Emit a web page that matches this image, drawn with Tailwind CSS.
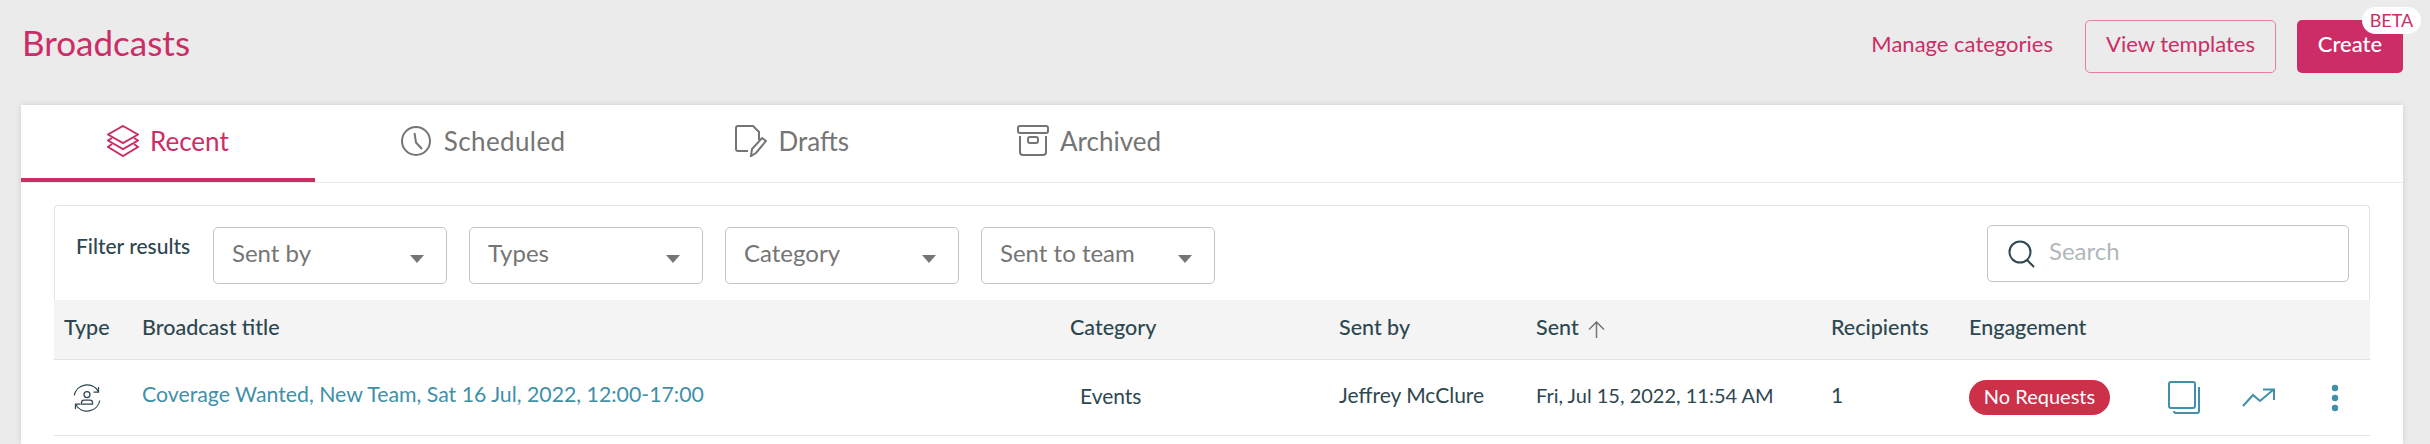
<!DOCTYPE html>
<html lang="en">
<head>
    <meta charset="UTF-8">
    <title>Broadcasts</title>
    <script src="https://cdn.jsdelivr.net/npm/@tailwindcss/browser@4"></script>
</head>
<body class="bg-[#ebebeb] h-[444px] overflow-hidden font-['Lato','Open_Sans',sans-serif]">

    <!-- Header -->
    <header class="h-[105px] flex justify-between pl-[22px] pr-[27px]">
        <h1 class="text-[35px] leading-[40px] mt-[22px] text-[#cd2d66] font-normal">Broadcasts</h1>
        <div class="flex items-start pt-[20px]">
            <a class="h-[47px] flex items-center text-[22px] text-[#cd2d66] mr-[32px]">Manage categories</a>
            <a class="w-[191px] h-[53px] pb-[6px] flex items-center justify-center rounded-[5px] border border-[#e87ea5] text-[22px] text-[#cd2d66] mr-[21px]">View templates</a>
            <button class="relative w-[106px] h-[53px] pb-[6px] flex items-center justify-center rounded-[5px] bg-[#cd2d66] text-[22px] font-medium text-white">
                Create
                <span class="absolute left-[65px] top-[-13px] w-[59px] h-[27px] flex items-center justify-center rounded-full bg-white text-[18px] font-normal text-[#cd2d66]">BETA</span>
            </button>
        </div>
    </header>

    <!-- Card -->
    <main class="ml-[21px] w-[2382px] h-[339px] bg-white shadow-[0_0_6px_rgba(0,0,0,0.12)]">

        <!-- Tabs -->
        <nav class="flex h-[78px] border-b border-[#ebebeb] text-[26px] text-[#757575]">
            <a class="flex items-center gap-[11px] px-[86px] h-[77px] pb-[1px] border-b-[4px] border-[#cd2d66] text-[#cd2d66]">
                <svg class="w-[32px] h-[32px]" viewBox="0 0 32 32" fill="none" stroke="currentColor" stroke-width="2"><path d="M16 1 31 9.5 16 18 1 9.5Z"/><path d="M5 13 1 15.5 16 24 31 15.5 27 13"/><path d="M5 19 1 22 16 31 31 22 27 19"/></svg>
                Recent
            </a>
            <a class="flex items-center gap-[13px] pl-[86px] pr-[83px] h-[77px] pb-[5px] tracking-[0.4px]">
                <svg class="w-[30px] h-[30px]" viewBox="0 0 30 30" fill="none" stroke="currentColor" stroke-width="2"><circle cx="15" cy="15" r="14"/><path d="M13.5 7 15 16.5 21 23"/></svg>
                Scheduled
            </a>
            <a class="flex items-center gap-[12px] pl-[86px] pr-[82px] h-[77px] pb-[5px]">
                <svg class="w-[32px] h-[32px]" viewBox="0 0 32 32" fill="none" stroke="currentColor" stroke-width="2"><path d="M13 26H3Q1 26 1 24V3Q1 1 3 1H18L24 7V15"/><path d="M16 31 17 24 27 13 31 16 21 28Z"/></svg>
                Drafts
            </a>
            <a class="flex items-center gap-[11px] px-[86px] h-[77px] pb-[5px]">
                <svg class="w-[32px] h-[32px]" viewBox="0 0 32 32" fill="none" stroke="currentColor" stroke-width="2"><rect x="1" y="1" width="30" height="7" rx="2"/><path d="M3 11V27Q3 30 6 30H26Q29 30 29 27V11"/><rect x="11" y="12" width="10" height="6" rx="2"/></svg>
                Archived
            </a>
        </nav>

        <section class="mx-[33px] mt-[22px]">
            <!-- Filters -->
            <div class="h-[95px] flex items-start border-x border-t border-[#e2e2e2] rounded-t-[4px] pl-[21px] pr-[20px] pt-[21px]">
                <span class="w-[137px] text-[21px] font-medium text-[#2d4750] leading-[40px] mt-[-1px]">Filter results</span>
                <div class="flex gap-[22px]">
                    <div class="w-[234px] h-[57px] flex items-center justify-between pl-[18px] pr-[22px] pb-[6px] rounded-[5px] border border-[#c4c4c4] text-[24px] text-[#757575]">Sent by<i class="w-0 h-0 mt-[12px] border-x-[7.5px] border-x-transparent border-t-[8px] border-t-[#757575]"></i></div>
                    <div class="w-[234px] h-[57px] flex items-center justify-between pl-[18px] pr-[22px] pb-[6px] rounded-[5px] border border-[#c4c4c4] text-[24px] text-[#757575]">Types<i class="w-0 h-0 mt-[12px] border-x-[7.5px] border-x-transparent border-t-[8px] border-t-[#757575]"></i></div>
                    <div class="w-[234px] h-[57px] flex items-center justify-between pl-[18px] pr-[22px] pb-[6px] rounded-[5px] border border-[#c4c4c4] text-[24px] text-[#757575]">Category<i class="w-0 h-0 mt-[12px] border-x-[7.5px] border-x-transparent border-t-[8px] border-t-[#757575]"></i></div>
                    <div class="w-[234px] h-[57px] flex items-center justify-between pl-[18px] pr-[22px] pb-[6px] rounded-[5px] border border-[#c4c4c4] text-[24px] text-[#757575]">Sent to team<i class="w-0 h-0 mt-[12px] border-x-[7.5px] border-x-transparent border-t-[8px] border-t-[#757575]"></i></div>
                </div>
                <div class="ml-auto mt-[-2px] w-[362px] h-[57px] flex items-center gap-[13px] pl-[20px] pb-[6px] rounded-[5px] border border-[#c4c4c4] text-[24px] text-[#b0b8bb]">
                    <svg class="w-[28px] h-[28px] mt-[6px] text-[#2d4750]" viewBox="0 0 28 28" fill="none" stroke="currentColor" stroke-width="2"><circle cx="12" cy="12" r="10.5"/><path d="M19 20 26 27"/></svg>
                    Search
                </div>
            </div>

            <!-- Table head -->
            <div class="grid grid-cols-[78px_928px_269px_197px_295px_138px_1fr] items-center h-[60px] pl-[10px] pb-[5px] bg-[#f4f4f4] border-b border-[#e2e2e2] text-[21.5px] font-medium text-[#2d4750]">
                <span>Type</span>
                <span>Broadcast title</span>
                <span>Category</span>
                <span>Sent by</span>
                <span class="flex items-center gap-[9px]">Sent
                    <svg class="w-[17px] h-[17px] mt-[4px] text-[#757575]" viewBox="0 0 17 17" fill="none" stroke="currentColor" stroke-width="1.5"><path d="M8.500 17V1M1 8.500 8.500 1 16 8.500"/></svg>
                </span>
                <span>Recipients</span>
                <span>Engagement</span>
            </div>

            <!-- Row -->
            <div class="grid grid-cols-[78px_928px_269px_197px_295px_138px_1fr] items-center h-[76px] pl-[10px] border-b border-[#e2e2e2] text-[21px] text-[#2d4750]">
                <svg class="w-[28px] h-[28px] ml-[9px]" viewBox="0 0 28 28" fill="none" stroke="currentColor" stroke-width="1.25"><path d="M1.200 11.500A13 13 0 0 1 25.300 7.500"/><path d="M25.500 3V8H20.500"/><path d="M26.800 16.500A13 13 0 0 1 2.700 20.500"/><path d="M2.500 25V20H7.500"/><circle cx="14" cy="10.500" r="3"/><path d="M8.500 20V18.500Q8.500 16 11 16H17Q19.500 16 19.500 18.500V20Z"/></svg>
                <a class="text-[21.28px] text-[#3f90a8] mb-[5px]">Coverage Wanted, New Team, Sat 16 Jul, 2022, 12:00-17:00</a>
                <span class="pl-[10px] mb-[3px]">Events</span>
                <span class="mb-[5px]">Jeffrey McClure</span>
                <span class="text-[20px] mb-[5px]">Fri, Jul 15, 2022, 11:54 AM</span>
                <span class="mb-[5px]">1</span>
                <div class="flex items-center">
                    <span class="w-[141px] h-[35px] pb-[3px] flex items-center justify-center rounded-full bg-[#cd3049] text-[20px] text-white">No Requests</span>
                    <svg class="ml-[58px] w-[33px] h-[33px] text-[#3f90a8]" viewBox="0 0 33 33" fill="none" stroke="currentColor" stroke-width="2"><rect x="1" y="1" width="26" height="26" rx="2"/><path d="M31 6V30Q31 32 29 32H8Q6 32 6 30"/></svg>
                    <svg class="ml-[41px] w-[34px] h-[19px] text-[#3f90a8]" viewBox="0 0 34 19" fill="none" stroke="currentColor" stroke-width="2"><path d="M1 18 11 7 18 13 31 2M21 1.500H32V12"/></svg>
                    <svg class="ml-[55px] w-[8px] h-[28px] text-[#3f90a8]" viewBox="0 0 8 28" fill="currentColor"><circle cx="4" cy="4" r="3.200"/><circle cx="4" cy="14" r="3.200"/><circle cx="4" cy="24" r="3.200"/></svg>
                </div>
            </div>
        </section>
    </main>
</body>
</html>
